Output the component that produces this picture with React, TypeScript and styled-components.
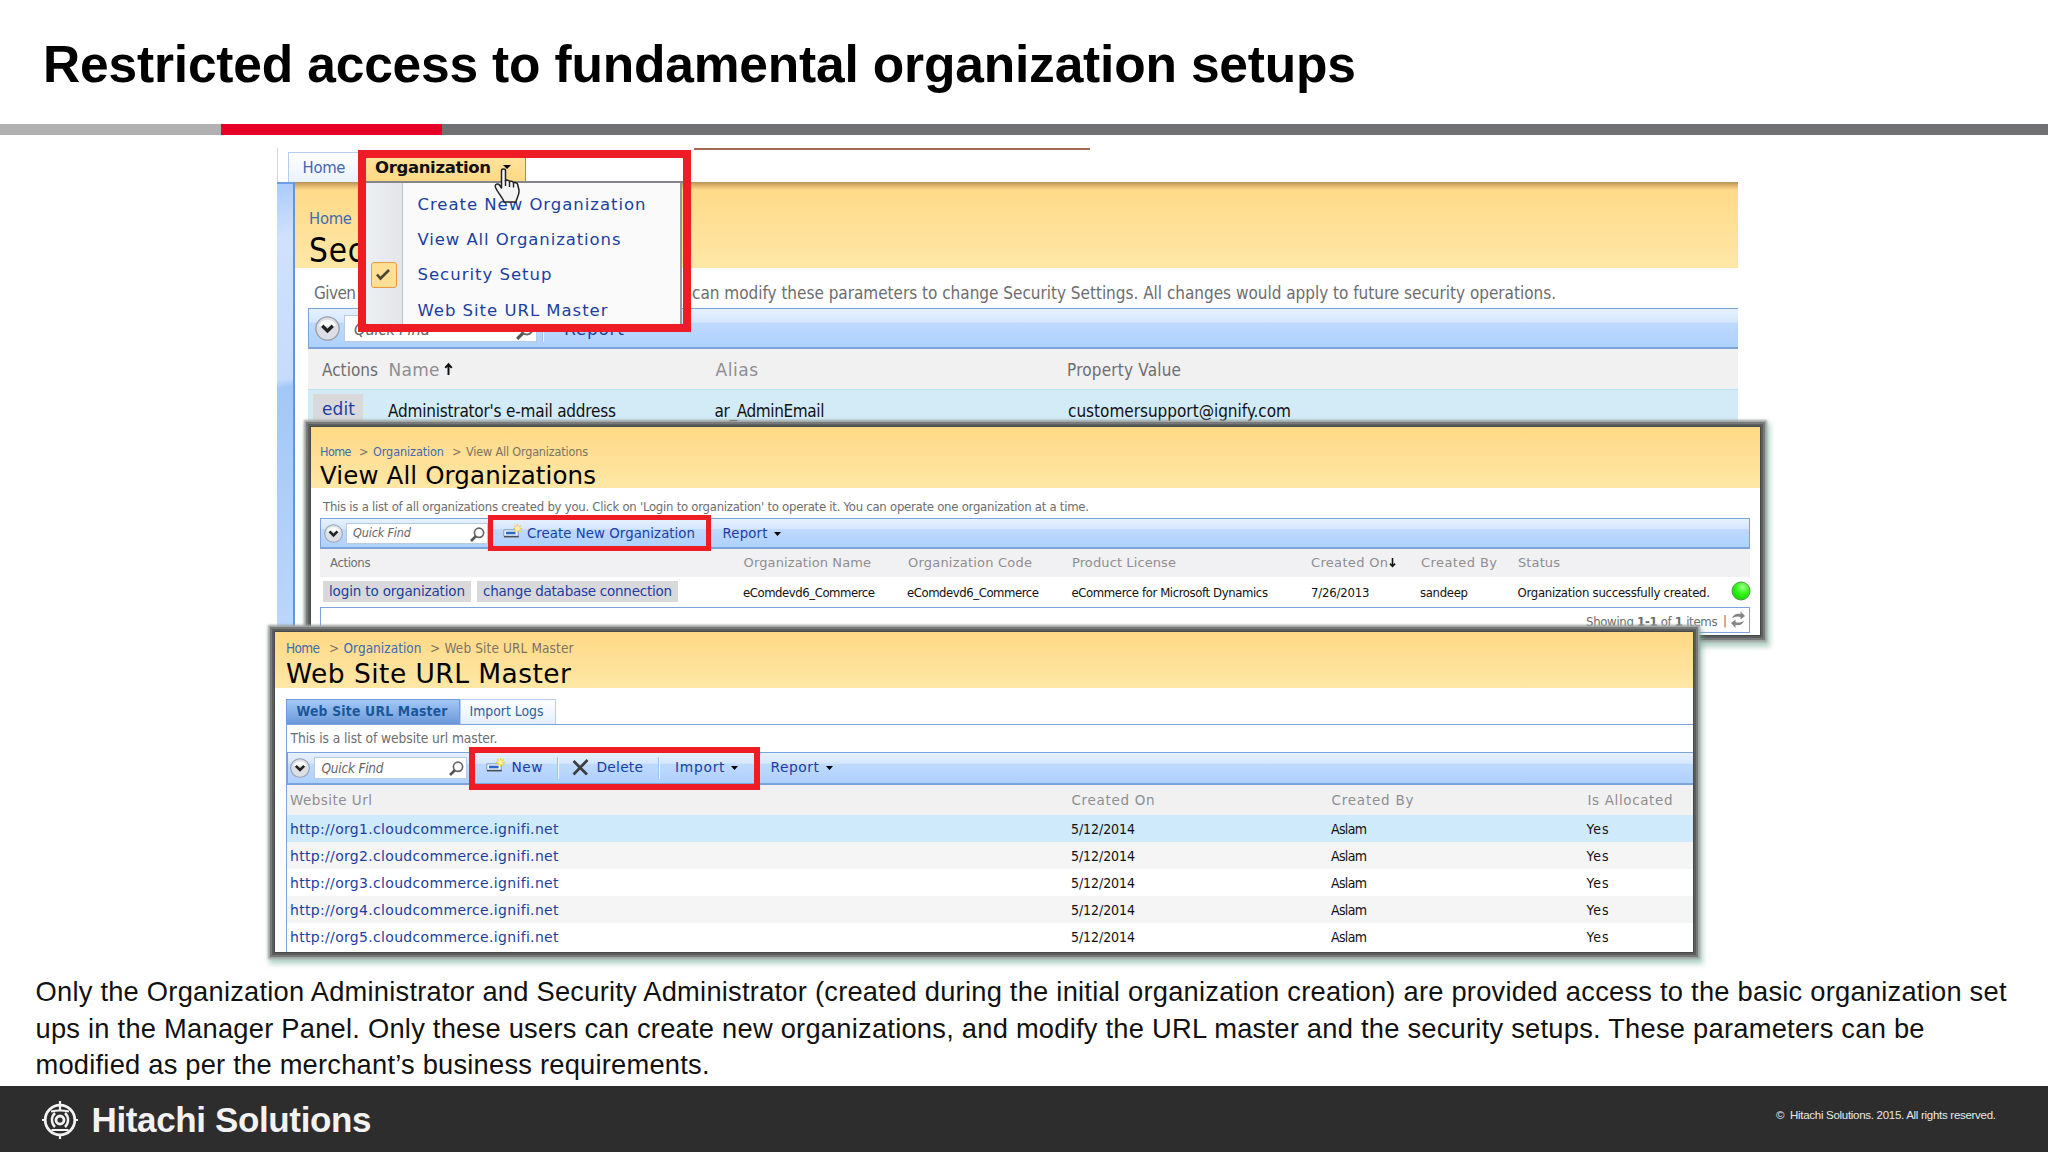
import React, { useLayoutEffect, useRef, useState } from "react";
import styled, { createGlobalStyle, css } from "styled-components";

const Global = createGlobalStyle`
  *, *::before, *::after { box-sizing: border-box; }
  body { margin: 0; background: #fff; }
`;

const tahoma = `"DejaVu Sans Condensed", "DejaVu Sans", sans-serif`;
const verdana = `"DejaVu Sans", sans-serif`;
const arial = `"Liberation Sans", Arial, sans-serif`;

/* ---------- text ---------- */

type Face = "tahoma" | "verdana" | "arial";
const faces = { tahoma, verdana, arial };

interface LabelLook {
  $size: number;
  $base: number;
  $width: number;
  $color: string;
  $face: Face;
  $bold?: boolean;
  $italic?: boolean;
}

/* A single line whose baseline sits $base px below the top of its row. */
const Line = styled.span<LabelLook>`
  display: block;
  flex: none;
  width: ${(p) => p.$width}px;
  margin-top: ${(p) => p.$base - p.$size * 0.846}px;
  font: ${(p) => (p.$italic ? "italic" : "normal")} ${(p) => (p.$bold ? 700 : 400)}
    ${(p) => p.$size}px / 1 ${(p) => faces[p.$face]};
  ${(p) => p.$face === "tahoma" && css`font-stretch: condensed;`}
  color: ${(p) => p.$color};
  white-space: pre;
`;

interface LabelProps {
  children: React.ReactNode;
  w: number;
  size: number;
  base: number;
  color?: string;
  face?: Face;
  bold?: boolean;
  italic?: boolean;
}

/* Tracks the letters so that the line fills exactly its column width. */
function Label({ children, w, size, base, color = "#111", face = "tahoma", bold, italic }: LabelProps) {
  const ref = useRef<HTMLSpanElement>(null);
  const [tracking, setTracking] = useState(0);
  useLayoutEffect(() => {
    const el = ref.current;
    if (!el) return;
    const count = (el.textContent || "").length;
    if (count > 1) setTracking((w - el.getBoundingClientRect().width) / (count - 1));
  }, []);
  return (
    <Line $size={size} $base={base} $width={w} $color={color} $face={face} $bold={bold} $italic={italic}>
      <span ref={ref} style={{ letterSpacing: tracking }}>{children}</span>
    </Line>
  );
}

/* ---------- slide ---------- */

const Slide = styled.main`
  width: 2048px;
  height: 1152px;
  display: flex;
  flex-direction: column;
  overflow: hidden;
  background: #fff;
`;

const Heading = styled.header`
  height: 124px;
  padding-left: 43px;
`;

const Stripe = styled.div`
  height: 11px;
  display: grid;
  grid-template-columns: 221px 221px 1fr;
  flex: none;
`;

const StripePart = styled.i<{ $color: string }>`
  background: ${(p) => p.$color};
`;

const Stage = styled.section`
  position: relative;
  height: 841px;
  flex: none;
`;

const Caption = styled.section`
  height: 110px;
  padding-left: 35.5px;
  flex: none;
`;

const CaptionRow = styled.div`
  display: flow-root;
  height: 36.7px;
`;

const Footer = styled.footer`
  height: 66px;
  background: #2d2d2d;
  display: flex;
  align-items: flex-start;
  padding: 0 52px 0 42px;
`;

const Mark = styled.svg`
  width: 36px;
  height: 38px;
  margin: 15px 13.5px 0 0;
`;

const Grow = styled.div`
  flex: 1;
`;

/* ---------- windows ---------- */

const Frame = styled.article<{ $x: number; $y: number; $w: number; $h: number }>`
  position: absolute;
  left: ${(p) => p.$x}px;
  top: ${(p) => p.$y}px;
  width: ${(p) => p.$w}px;
  height: ${(p) => p.$h}px;
  overflow: hidden;
  background: #fff;
`;

const ShadowFrame = styled(Frame)`
  box-shadow:
    0 0 0 1px #464947,
    0 0 0 3px #5a5d5c,
    0 0 0 5px #777a79,
    0 0 2px 7px #a0a3a2,
    2px 4px 5px 8px rgba(110, 170, 145, 0.5);
`;

const Banner = styled.div<{ $h: number; $pad: number }>`
  display: flex;
  flex-direction: column;
  height: ${(p) => p.$h}px;
  padding-left: ${(p) => p.$pad}px;
  background: linear-gradient(#ffd986, #fee7a6);
`;

const ShadedBanner = styled(Banner)`
  background:
    linear-gradient(#b09358 0, #dcae68 3px, rgba(255, 217, 134, 0) 8px),
    linear-gradient(#ffd986, #fee7a6);
`;

const Row = styled.div<{ $h: number; $from: number; $stops: number[]; $bg?: string; $top?: string }>`
  flex: none;
  height: ${(p) => p.$h}px;
  padding-left: ${(p) => p.$stops[0] - p.$from}px;
  display: grid;
  grid-template-columns: ${(p) =>
    p.$stops.slice(1).map((x, i) => `${x - p.$stops[i]}px`).join(" ")} 1fr;
  align-items: start;
  background: ${(p) => p.$bg || "transparent"};
  ${(p) => p.$top && css`box-shadow: inset 0 1px ${p.$top};`}
`;

const Bar = styled(Row)<{ $sides?: boolean }>`
  background: linear-gradient(#e6f1fe 0, #d6e7fd 34%, #bfd9fe 38%, #aed1fd 100%);
  border: solid #7ba4dc;
  border-width: ${(p) => (p.$sides ? "1.5px 1.5px 2px" : "1.5px 0 2px 1.5px")};
`;

const Inset = styled.div<{ $l: number; $r: number }>`
  margin: 0 ${(p) => p.$r}px 0 ${(p) => p.$l}px;
`;

const SearchBox = styled.div<{ $w: number; $h: number; $top: number; $pad: number }>`
  width: ${(p) => p.$w}px;
  height: ${(p) => p.$h}px;
  margin-top: ${(p) => p.$top}px;
  padding: 0 2px 0 ${(p) => p.$pad}px;
  display: flex;
  justify-content: space-between;
  background: #fff;
  border: 1px solid #b9cbe4;
`;

const Glyph = styled.svg<{ $w: number; $h: number; $top: number }>`
  display: block;
  width: ${(p) => p.$w}px;
  height: ${(p) => p.$h}px;
  margin-top: ${(p) => p.$top}px;
  overflow: visible;
`;

const ActionLink = styled.div<{ $w: number; $h: number; $top: number; $pad: number }>`
  width: ${(p) => p.$w}px;
  height: ${(p) => p.$h}px;
  margin-top: ${(p) => p.$top}px;
  padding-left: ${(p) => p.$pad}px;
  background: #d9d9db;
`;

const Divider = styled.i<{ $top: number; $h: number }>`
  width: 2px;
  height: ${(p) => p.$h}px;
  margin-top: ${(p) => p.$top}px;
  background: #9fc0ee;
  border-right: 1px solid #eef5ff;
`;

const Callout = styled.div<{ $x: number; $y: number; $w: number; $h: number; $b: number }>`
  position: absolute;
  left: ${(p) => p.$x}px;
  top: ${(p) => p.$y}px;
  width: ${(p) => p.$w}px;
  height: ${(p) => p.$h}px;
  border: ${(p) => p.$b}px solid #ee1c25;
`;

const Overline = styled.i`
  position: absolute;
  left: 694px;
  top: 13px;
  width: 396px;
  height: 2px;
  background: #a26a50;
`;

/* ---------- first window ---------- */

const NavStrip = styled.div`
  height: 34px;
  padding: 4px 0 0 10px;
  border-left: 1px solid #cfd2d8;
`;

const HomeTab = styled.div`
  width: 90px;
  height: 30px;
  padding-left: 13.5px;
  border: 1px solid #b5cef0;
  border-bottom: 0;
  background: linear-gradient(#fff, #eaf2fd);
`;

const Body = styled.div`
  display: flex;
  height: 445px;
`;

const Rail = styled.aside`
  width: 18px;
  flex: none;
  border-top: 2px solid #6c9fe4;
  border-right: 2px solid #5f96df;
  background: linear-gradient(170deg, #a9ccfb 0, #cfe1fc 12%, #c7dcfb 44%, #a3c7f7 46%, #bcd6fb 100%);
`;

const Pane = styled.div`
  flex: 1;
`;

const MenuTabs = styled.div`
  height: 25px;
  display: flex;
  background: #fff;
  border-bottom: 2px solid #85858a;
`;

const MenuTab = styled.div`
  width: 160px;
  padding-left: 9px;
  display: flex;
  background: linear-gradient(#ffe39c, #ffd884);
  border-right: 1px solid #a58d56;
`;

const MenuPanel = styled.div`
  height: 141px;
  display: flex;
  background: #fafafb;
  border-right: 2px solid #98989c;
  margin-right: 1px;
`;

const MenuRail = styled.div`
  width: 37px;
  height: 141px;
  padding: 79px 0 0 5px;
  background: linear-gradient(90deg, #edf0f2, #e3e5e9);
  border-right: 1px solid #bfc1c6;
`;

const CheckBox = styled.div`
  width: 26px;
  height: 26px;
  border: 1.5px solid #f09a3e;
  border-radius: 3px;
  background: #ffdf93;
`;

const MenuList = styled.div`
  padding-left: 14.5px;
`;

const MenuItem = styled.div`
  display: flow-root;
  height: 35.2px;
`;

const Pointer = styled.svg`
  position: absolute;
  left: 493px;
  top: 33px;
  width: 29px;
  height: 37px;
`;

/* ---------- second window ---------- */

const Pager = styled(Row)`
  border: 1.5px solid #7ea3dc;
`;

/* ---------- third window ---------- */

const Tabs = styled.div`
  height: 36px;
  padding: 11px 0 0 11px;
  display: flex;
`;

const Tab = styled.div<{ $active?: boolean; $w: number; $pad: number }>`
  width: ${(p) => p.$w}px;
  padding-left: ${(p) => p.$pad}px;
  border: 1px solid ${(p) => (p.$active ? "#6f9bd8" : "#b7d0f1")};
  border-bottom: 0;
  background: ${(p) =>
    p.$active ? "linear-gradient(#a4c8f7, #6a98d8)" : "linear-gradient(#fff, #e3effd)"};
`;

const Sheet = styled.div`
  height: 229px;
  margin-left: 11px;
  border-left: 1.5px solid #7ea3dc;
  border-top: 1.5px solid #7ea3dc;
`;

/* ---------- icons ---------- */

const blue = "#1b3fa0";

const Chevron = ({ d, top }: { d: number; top: number }) => (
  <Glyph $w={d} $h={d} $top={top} viewBox="0 0 20 20">
    <circle cx="10" cy="10" r="9.3" fill="#dcdfe5" stroke="#9aa0ac" strokeWidth="1.1" />
    <path d="M3 8a7.4 7 0 0 1 14 0z" fill="#fafafa" />
    <path d="M5.8 7.8 10 12l4.2-4.2" fill="none" stroke="#222" strokeWidth="2.6" />
  </Glyph>
);

const Magnifier = ({ top, size = 15 }: { top: number; size?: number }) => (
  <Glyph $w={size} $h={size} $top={top} viewBox="0 0 15 15">
    <circle cx="9" cy="5.8" r="4.6" fill="#fff" stroke="#666" strokeWidth="1.7" />
    <path d="M5.8 9.3 1 14" stroke="#555" strokeWidth="2.6" />
  </Glyph>
);

const Caret = ({ top, w = 7 }: { top: number; w?: number }) => (
  <Glyph $w={w} $h={4} $top={top} viewBox="0 0 7 4" preserveAspectRatio="none">
    <path d="M0 0h7L3.5 4z" fill="#000" />
  </Glyph>
);

const NewIcon = ({ top }: { top: number }) => (
  <Glyph $w={20} $h={15} $top={top} viewBox="0 0 20 15">
    <path d="M.8 5.8h14.4v6.4H.8z" fill="#eef4fc" stroke="#7d9cc8" />
    <path d="M1 12.7h14.8" stroke="#4d4d52" strokeWidth="1.5" />
    <path d="M3 9h9.5" stroke="#2868c8" strokeWidth="2.6" />
    <path d="M14.5 0v9M10 4.5h9M11.3 1.3l6.4 6.4M17.7 1.3l-6.4 6.4" stroke="#f3cf45" strokeWidth="1.3" />
    <circle cx="14.5" cy="4.5" r="2.3" fill="#fff3a8" />
  </Glyph>
);

const Cross = ({ top }: { top: number }) => (
  <Glyph $w={17} $h={17} $top={top} viewBox="0 0 17 17">
    <path d="M1.5 2 15 15.5M15.5 1 1.5 15.5" stroke="#3b3d42" strokeWidth="2.7" />
  </Glyph>
);

const SortArrow = ({ top, up }: { top: number; up?: boolean }) => (
  <Glyph $w={up ? 9 : 7} $h={up ? 12 : 9.5} $top={top} viewBox="0 0 8 11">
    <path
      d={up ? "M4 11V1.5M1 4.5 4 1.2l3 3.3" : "M4 0v9.5M1 6.5 4 9.8l3-3.3"}
      fill="none"
      stroke="#111"
      strokeWidth="1.8"
    />
  </Glyph>
);

const Refresh = ({ top }: { top: number }) => (
  <Glyph $w={14} $h={17} $top={top} viewBox="0 0 14 17">
    <path d="M1 7.5C2 3.5 6 2 9.5 3.2V.3L14 5 9.5 8.6V6C6.5 4.8 3.5 5.5 1 7.5z" fill="#858585" />
    <path d="M13 9.5C12 13.5 8 15 4.5 13.8V17L0 12l4.5-3.6V11c3 1.2 6 .5 8.5-1.5z" fill="#858585" />
  </Glyph>
);

const Status = ({ top }: { top: number }) => (
  <Glyph $w={20} $h={20} $top={top} viewBox="0 0 20 20">
    <defs>
      <radialGradient id="lamp" cx=".6" cy=".3" r=".7">
        <stop offset="0" stopColor="#a6ff94" />
        <stop offset=".5" stopColor="#35f51c" />
        <stop offset="1" stopColor="#17d800" />
      </radialGradient>
    </defs>
    <circle cx="10" cy="10" r="9" fill="url(#lamp)" stroke="#4a9c3d" />
  </Glyph>
);

/* ---------- data ---------- */

const menu: [string, number][] = [
  ["Create New Organization", 228],
  ["View All Organizations", 203],
  ["Security Setup", 134],
  ["Web Site URL Master", 190],
];

const sites = [1, 2, 3, 4, 5].map((n) => ({
  url: `http://org${n}.cloudcommerce.ignifi.net`,
  on: "5/12/2014",
  by: "Aslam",
  allocated: "Yes",
}));

const rowTint = ["#cfeafa", "#f5f5f6", "#fff", "#f5f5f6", "#fff"];

const grey = "#8e8e90";
const dark = "#6d6d6f";
const crumb = "#3f6bb0";
const brown = "#7d7263";

function SecurityWindow() {
  return (
    <Frame $x={277} $y={13} $w={1461} $h={479}>
      <NavStrip>
        <HomeTab><Label w={43} size={16.5} base={20.5} color="#3f66b4">Home</Label></HomeTab>
      </NavStrip>
      <Body>
        <Rail />
        <Pane>
          <ShadedBanner $h={86} $pad={14}>
            <Label w={43} size={16.5} base={42.7} color={crumb}>Home</Label>
            <Label w={55} size={33} base={34.5} color="#000">Sec</Label>
          </ShadedBanner>
          <Row $h={40} $from={295} $stops={[314, 692]}>
            <Label w={42} size={17} base={31.3} color={dark}>Given</Label>
            <Label w={864} size={17} base={31.3} color={dark}>
              can modify these parameters to change Security Settings. All changes would apply to future security operations.
            </Label>
          </Row>
          <Inset $l={13} $r={0}>
            <Bar $h={41} $from={309} $stops={[315, 344, 542, 564]}>
              <Chevron d={25} top={7} />
              <SearchBox $w={193} $h={27} $top={6} $pad={9}>
                <Label w={76} size={16.5} base={20} color="#666" italic>Quick Find</Label>
                <Magnifier top={6} size={18} />
              </SearchBox>
              <Divider $top={6} $h={27} />
              <Label w={60} size={17} base={26.5} color={blue} face="verdana">Report</Label>
            </Bar>
            <Row $h={40} $from={308} $bg="#f1f1f2" $stops={[322, 388.5, 444, 715.5, 1067]}>
              <Label w={56} size={17} base={27} color={dark}>Actions</Label>
              <Label w={51} size={17} base={27} color={grey} face="verdana">Name</Label>
              <SortArrow top={14} up />
              <Label w={42.5} size={17} base={27} color={grey} face="verdana">Alias</Label>
              <Label w={114} size={17} base={27} color={dark}>Property Value</Label>
            </Row>
            <Row $h={40} $from={308} $bg="#d2ebf7" $top="#b7e0f2" $stops={[313, 388, 714.5, 1068]}>
              <ActionLink $w={50} $h={34} $top={5} $pad={9}>
                <Label w={33} size={17} base={21.7} color={blue} face="verdana">edit</Label>
              </ActionLink>
              <Label w={228} size={17} base={28.5}>Administrator's e-mail address</Label>
              <Label w={110} size={17} base={28.5}>ar_AdminEmail</Label>
              <Label w={223} size={17} base={28.5}>customersupport@ignify.com</Label>
            </Row>
          </Inset>
        </Pane>
      </Body>
    </Frame>
  );
}

function OrganizationMenu() {
  return (
    <Callout $x={358} $y={15} $w={333} $h={182} $b={8}>
      <MenuTabs>
        <MenuTab>
          <Label w={116} size={16.5} base={16} color="#111" face="verdana" bold>Organization</Label>
          <Inset $l={12} $r={0}><Caret top={7} w={8} /></Inset>
        </MenuTab>
      </MenuTabs>
      <MenuPanel>
        <MenuRail>
          <CheckBox>
            <Glyph $w={14} $h={12} $top={6} viewBox="-5 0 14 12">
              <path d="M0 5.5 3.5 9.5 12 1" fill="none" stroke="#4c4534" strokeWidth="2.6" />
            </Glyph>
          </CheckBox>
        </MenuRail>
        <MenuList>
          {menu.map(([name, w]) => (
            <MenuItem key={name}>
              <Label w={w} size={16.5} base={28} color={blue} face="verdana">{name}</Label>
            </MenuItem>
          ))}
        </MenuList>
      </MenuPanel>
    </Callout>
  );
}

function HandPointer() {
  return (
    <Pointer viewBox="0 0 29 37">
      <path
        d="M8.5 2.5c0-2 4-2 4 0V13c.6-1.5 4-1 4 .8.8-1.2 4-.6 4 1.2.8-1 4.2-.4 4.2 1.8L26 22c.6 5-2.5 8-3 12H11C10 30 5.5 26 2.5 19.5 1.5 16 5 15 6.5 17l2 3z"
        fill="#f4f4f4"
        stroke="#222"
        strokeWidth="1.5"
        strokeLinejoin="round"
      />
      <path d="M12.5 12v6M16.5 13.5V19M20.5 15v4.5" stroke="#222" strokeWidth="1.4" />
    </Pointer>
  );
}

function OrganizationsWindow() {
  const h = { size: 13, base: 18.7, color: grey, face: "verdana" as Face };
  const v = { size: 13, base: 20.5 };
  return (
    <ShadowFrame $x={310.5} $y={292} $w={1449.5} $h={208}>
      <Banner $h={61} $pad={9.5}>
        <Row $h={34} $from={320} $stops={[320, 359, 373, 452, 466]}>
          <Label w={31.5} size={12.5} base={29.9} color={crumb}>Home</Label>
          <Label w={8} size={12.5} base={29.9} color={brown}>&gt;</Label>
          <Label w={71} size={12.5} base={29.9} color={crumb}>Organization</Label>
          <Label w={8} size={12.5} base={29.9} color={brown}>&gt;</Label>
          <Label w={122} size={12.5} base={29.9} color={brown}>View All Organizations</Label>
        </Row>
        <Label w={276} size={24.5} base={23.5} color="#000" face="verdana">View All Organizations</Label>
      </Banner>
      <Row $h={30} $from={310.5} $stops={[323]}>
        <Label w={766} size={13} base={23} color={dark}>
          This is a list of all organizations created by you. Click on 'Login to organization' to operate it. You can operate one organization at a time.
        </Label>
      </Row>
      <Inset $l={9.5} $r={10}>
        <Bar $sides $h={30.5} $from={321} $stops={[324, 346, 503, 527, 722.5, 774]}>
          <Chevron d={19} top={4.5} />
          <SearchBox $w={142} $h={21} $top={3.5} $pad={6}>
            <Label w={58} size={12.5} base={14.5} color="#666" italic>Quick Find</Label>
            <Magnifier top={3} />
          </SearchBox>
          <NewIcon top={4.5} />
          <Label w={168} size={13.3} base={19} color={blue} face="verdana">Create New Organization</Label>
          <Label w={45} size={13.3} base={19} color={blue} face="verdana">Report</Label>
          <Caret top={12.5} />
        </Bar>
        <Row $h={28} $from={320} $bg="#f1f1f3" $stops={[330, 743.6, 908, 1072, 1311, 1389.5, 1421, 1518]}>
          <Label {...h} w={40.5} color={dark} face="tahoma">Actions</Label>
          <Label {...h} w={127.5}>Organization Name</Label>
          <Label {...h} w={124}>Organization Code</Label>
          <Label {...h} w={104}>Product License</Label>
          <Label {...h} w={77}>Created On</Label>
          <SortArrow top={9} />
          <Label {...h} w={76}>Created By</Label>
          <Label {...h} w={42}>Status</Label>
        </Row>
        <Row $h={30.5} $from={320} $stops={[323, 477, 743, 907, 1071.5, 1311, 1420, 1517.5, 1731]}>
          <ActionLink $w={147.5} $h={21} $top={4} $pad={6}>
            <Label w={136} size={13.5} base={16} color={blue} face="verdana">login to organization</Label>
          </ActionLink>
          <ActionLink $w={201} $h={21} $top={4} $pad={6}>
            <Label w={189} size={13.5} base={16} color={blue} face="verdana">change database connection</Label>
          </ActionLink>
          <Label {...v} w={132}>eComdevd6_Commerce</Label>
          <Label {...v} w={132}>eComdevd6_Commerce</Label>
          <Label {...v} w={196.5}>eCommerce for Microsoft Dynamics</Label>
          <Label {...v} w={58.5}>7/26/2013</Label>
          <Label {...v} w={48}>sandeep</Label>
          <Label {...v} w={192.5}>Organization successfully created.</Label>
          <Status top={4.5} />
        </Row>
        <Pager $h={26} $from={321} $stops={[1586, 1723, 1731]}>
          <Label w={131.5} size={13} base={17.5} color={dark}>
            Showing <b>1-1</b> of <b>1</b> items
          </Label>
          <Label w={4} size={13} base={17} color={dark}>|</Label>
          <Refresh top={3} />
        </Pager>
      </Inset>
    </ShadowFrame>
  );
}

function UrlMasterWindow() {
  const h = { size: 13.5, base: 20.7, color: grey, face: "verdana" as Face };
  const v = { size: 14, base: 19 };
  return (
    <ShadowFrame $x={274.5} $y={497} $w={1418.5} $h={320}>
      <Banner $h={56} $pad={11.5}>
        <Row $h={26} $from={286} $stops={[286, 329, 343.5, 430, 444.5]}>
          <Label w={34} size={13.5} base={21.7} color={crumb}>Home</Label>
          <Label w={8} size={13.5} base={21.7} color={brown}>&gt;</Label>
          <Label w={78} size={13.5} base={21.7} color={crumb}>Organization</Label>
          <Label w={8} size={13.5} base={21.7} color={brown}>&gt;</Label>
          <Label w={129} size={13.5} base={21.7} color={brown}>Web Site URL Master</Label>
        </Row>
        <Label w={285} size={26.5} base={25} color="#000" face="verdana">Web Site URL Master</Label>
      </Banner>
      <Tabs>
        <Tab $active $w={174} $pad={10}>
          <Label w={151} size={13.8} base={16.9} color="#1c5799" bold>Web Site URL Master</Label>
        </Tab>
        <Tab $w={96} $pad={9}>
          <Label w={74} size={13.8} base={16.9} color="#2c60a5">Import Logs</Label>
        </Tab>
      </Tabs>
      <Sheet>
        <Row $h={26.5} $from={287} $stops={[291]}>
          <Label w={207} size={13.7} base={18.5} color={dark}>This is a list of website url master.</Label>
        </Row>
        <Bar $h={33} $from={288} $stops={[290.5, 314, 486, 512, 557, 572, 597, 658, 675.5, 731.5, 771, 826.5]}>
          <Chevron d={20} top={5} />
          <SearchBox $w={153} $h={22} $top={4} $pad={7}>
            <Label w={62} size={13.5} base={15.5} color="#666" italic>Quick Find</Label>
            <Magnifier top={3} />
          </SearchBox>
          <NewIcon top={5.5} />
          <Label w={31} size={13.8} base={20.3} color={blue} face="verdana">New</Label>
          <Divider $top={4} $h={22} />
          <Cross top={6} />
          <Label w={46.5} size={13.8} base={20.3} color={blue} face="verdana">Delete</Label>
          <Divider $top={4} $h={22} />
          <Label w={49.5} size={13.8} base={20.3} color={blue} face="verdana">Import</Label>
          <Caret top={13.5} />
          <Label w={48.5} size={13.8} base={20.3} color={blue} face="verdana">Report</Label>
          <Caret top={13.5} />
        </Bar>
        <Row $h={30.5} $from={287} $bg="#f1f1f2" $stops={[290.5, 1072, 1332, 1588]}>
          <Label {...h} w={82}>Website Url</Label>
          <Label {...h} w={83}>Created On</Label>
          <Label {...h} w={82}>Created By</Label>
          <Label {...h} w={85}>Is Allocated</Label>
        </Row>
        {sites.map((s, i) => (
          <Row key={s.url} $h={27} $from={287} $bg={rowTint[i]} $stops={[290.5, 1071.5, 1331.5, 1587]}>
            <Label {...v} w={268.5} color={blue} face="verdana">{s.url}</Label>
            <Label {...v} w={64}>{s.on}</Label>
            <Label {...v} w={36}>{s.by}</Label>
            <Label {...v} w={22}>{s.allocated}</Label>
          </Row>
        ))}
      </Sheet>
    </ShadowFrame>
  );
}

export default function App() {
  return (
    <Slide>
      <Global />
      <Heading>
        <Label w={1313} size={51.5} base={83} color="#000" face="arial" bold>
          Restricted access to fundamental organization setups
        </Label>
      </Heading>
      <Stripe>
        <StripePart $color="#b1b1b1" />
        <StripePart $color="#e60027" />
        <StripePart $color="#717173" />
      </Stripe>
      <Stage>
        <SecurityWindow />
        <Overline />
        <OrganizationMenu />
        <HandPointer />
        <OrganizationsWindow />
        <Callout $x={488} $y={379.5} $w={223} $h={36} $b={5} />
        <UrlMasterWindow />
        <Callout $x={468.5} $y={611.5} $w={291.5} $h={43} $b={6} />
      </Stage>
      <Caption>
        <CaptionRow>
          <Label w={1971} size={27.3} base={25} color="#111" face="arial">
            Only the Organization Administrator and Security Administrator (created during the initial organization creation) are provided access to the basic organization set
          </Label>
        </CaptionRow>
        <CaptionRow>
          <Label w={1889} size={27.3} base={25} color="#111" face="arial">
            ups in the Manager Panel. Only these users can create new organizations, and modify the URL master and the security setups. These parameters can be
          </Label>
        </CaptionRow>
        <CaptionRow>
          <Label w={674} size={27.3} base={25} color="#111" face="arial">
            modified as per the merchant’s business requirements.
          </Label>
        </CaptionRow>
      </Caption>
      <Footer>
        <Mark viewBox="0 0 36 38" fill="none" stroke="#f2f2f2">
          <circle cx="18" cy="19" r="14.8" strokeWidth="2.8" />
          <circle cx="18" cy="19" r="4" strokeWidth="2.8" />
          <path d="M13 12a9.5 9.5 0 0 0 0 14M23 12a9.5 9.5 0 0 1 0 14" strokeWidth="2.4" />
          <path d="M9 10.5q9-2 18 0M9.5 29h17" strokeWidth="2.2" />
          <path d="M18 0v9M18 33v5M0 19h4M32 19h4" strokeWidth="2.2" />
        </Mark>
        <Label w={280} size={35} base={46} color="#f2f2f2" face="arial" bold>Hitachi Solutions</Label>
        <Grow />
        <Label w={220} size={11.5} base={34} color="#e8e8e8" face="arial">©  Hitachi Solutions. 2015. All rights reserved.</Label>
      </Footer>
    </Slide>
  );
}
